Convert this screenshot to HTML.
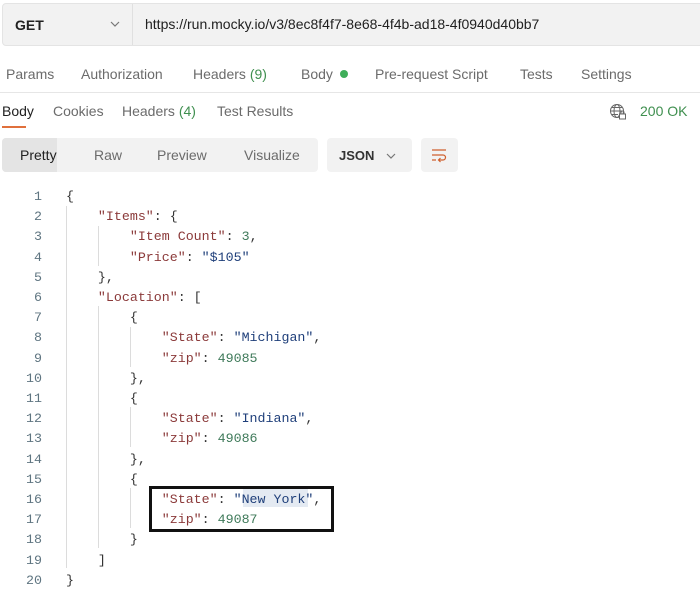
<!DOCTYPE html>
<html><head><style>
*{margin:0;padding:0;box-sizing:border-box}
body{width:700px;height:614px;background:#fff;position:relative;overflow:hidden;font-family:"Liberation Sans",sans-serif;color:#212121}
.a{position:absolute;white-space:nowrap}
.t{font-size:14px;color:#6b6b6b}
.code{font-family:"Liberation Mono","DejaVu Sans Mono",monospace;font-size:13.3px}
.k{color:#8b3a3a}
.s{color:#1f3f7a}
.n{color:#3f7a5a}
.g{position:absolute;width:1px;background:#dcdcdc}
</style></head><body>
<div class="a" style="left:2px;top:3px;width:710px;height:43px;background:#f2f2f2;border:1px solid #e4e4e4;border-radius:4px"></div>
<div class="a" style="left:132px;top:4px;width:1px;height:41px;background:#e0e0e0"></div>
<div class="a" style="left:15px;top:17px;font-size:14px;font-weight:bold;color:#212121">GET</div>
<svg class="a" style="left:110px;top:20px" width="10" height="8"><path d="M1 2 L5 6 L9 2" fill="none" stroke="#777" stroke-width="1.2"/></svg>
<div class="a" style="left:145px;top:16px;font-size:14px;color:#212121">https://run.mocky.io/v3/8ec8f4f7-8e68-4f4b-ad18-4f0940d40bb7</div>

<div class="a t" style="left:6px;top:66px">Params</div>
<div class="a t" style="left:81px;top:66px">Authorization</div>
<div class="a t" style="left:193px;top:66px">Headers <span style="color:#3f8f4f">(9)</span></div>
<div class="a t" style="left:301px;top:66px">Body</div>
<div class="a" style="left:340px;top:70px;width:8px;height:8px;border-radius:50%;background:#3fae5a"></div>
<div class="a t" style="left:375px;top:66px">Pre-request Script</div>
<div class="a t" style="left:520px;top:66px">Tests</div>
<div class="a t" style="left:581px;top:66px">Settings</div>
<div class="a" style="left:0;top:92px;width:700px;height:1px;background:#e6e6e6"></div>

<div class="a" style="left:2px;top:103px;font-size:14px;color:#212121">Body</div>
<div class="a" style="left:2px;top:126px;width:24px;height:2px;background:#e0703c"></div>
<div class="a t" style="left:53px;top:103px">Cookies</div>
<div class="a t" style="left:122px;top:103px">Headers <span style="color:#3f8f4f">(4)</span></div>
<div class="a t" style="left:217px;top:103px">Test Results</div>
<svg class="a" style="left:609px;top:103px" width="18" height="18" fill="none" stroke="#666" stroke-width="1"><circle cx="8" cy="8" r="6.5"/><ellipse cx="8" cy="8" rx="3" ry="6.5"/><path d="M1.5 8H14.5M3 4.5H13M3 11.5H9"/><rect x="10.5" y="11" width="6" height="5" fill="#fff"/><path d="M12 11V9.5a1.5 1.5 0 0 1 3 0V11"/></svg>
<div class="a" style="left:640px;top:103px;font-size:14px;color:#3f8f4f">200 OK</div>

<div class="a" style="left:2px;top:138px;width:316px;height:34px;background:#f2f2f2;border-radius:4px"></div>
<div class="a" style="left:2px;top:138px;width:55px;height:34px;background:#e4e4e4;border-radius:4px 0 0 4px"></div>
<div class="a" style="left:20px;top:147px;font-size:14px;color:#212121">Pretty</div>
<div class="a t" style="left:94px;top:147px">Raw</div>
<div class="a t" style="left:157px;top:147px">Preview</div>
<div class="a t" style="left:244px;top:147px">Visualize</div>
<div class="a" style="left:327px;top:138px;width:85px;height:34px;background:#f2f2f2;border-radius:4px"></div>
<div class="a" style="left:339px;top:148px;font-size:13px;font-weight:bold;color:#333">JSON</div>
<svg class="a" style="left:386px;top:152px" width="10" height="8"><path d="M1 2 L5 6 L9 2" fill="none" stroke="#777" stroke-width="1.2"/></svg>
<div class="a" style="left:421px;top:138px;width:37px;height:34px;background:#f2f2f2;border-radius:4px"></div>
<svg class="a" style="left:430px;top:147px" width="18" height="16" fill="none" stroke="#d0602e" stroke-width="1.2"><path d="M2 3H16M2 8H13a2.5 2.5 0 0 1 0 5H9M2 13H6M10.5 11L8.5 13L10.5 15"/></svg>

<div class="g" style="left:66px;top:206px;height:362px"></div>
<div class="g" style="left:98px;top:226px;height:40px"></div>
<div class="g" style="left:98px;top:306px;height:242px"></div>
<div class="g" style="left:130px;top:327px;height:40px"></div>
<div class="g" style="left:130px;top:407px;height:40px"></div>
<div class="g" style="left:130px;top:488px;height:40px"></div>
<div class="a" style="left:243px;top:489px;width:65px;height:18px;background:#e4eaf2"></div>

<div class="a" style="left:0;top:187px">
<div style="position:relative">
<pre class="code" style="position:absolute;left:0;width:42px;text-align:right;color:#5f7581;line-height:20.2px">1
2
3
4
5
6
7
8
9
10
11
12
13
14
15
16
17
18
19
20</pre>
<pre class="code" style="position:absolute;left:66px;line-height:20.2px;color:#333">{
    <span class="k">"Items"</span>: {
        <span class="k">"Item Count"</span>: <span class="n">3</span>,
        <span class="k">"Price"</span>: <span class="s">"$105"</span>
    },
    <span class="k">"Location"</span>: [
        {
            <span class="k">"State"</span>: <span class="s">"Michigan"</span>,
            <span class="k">"zip"</span>: <span class="n">49085</span>
        },
        {
            <span class="k">"State"</span>: <span class="s">"Indiana"</span>,
            <span class="k">"zip"</span>: <span class="n">49086</span>
        },
        {
            <span class="k">"State"</span>: <span class="s">"New York"</span>,
            <span class="k">"zip"</span>: <span class="n">49087</span>
        }
    ]
}</pre>
</div></div>
<div class="a" style="left:149px;top:486px;width:185px;height:46px;border:3px solid #111"></div>
</body></html>
